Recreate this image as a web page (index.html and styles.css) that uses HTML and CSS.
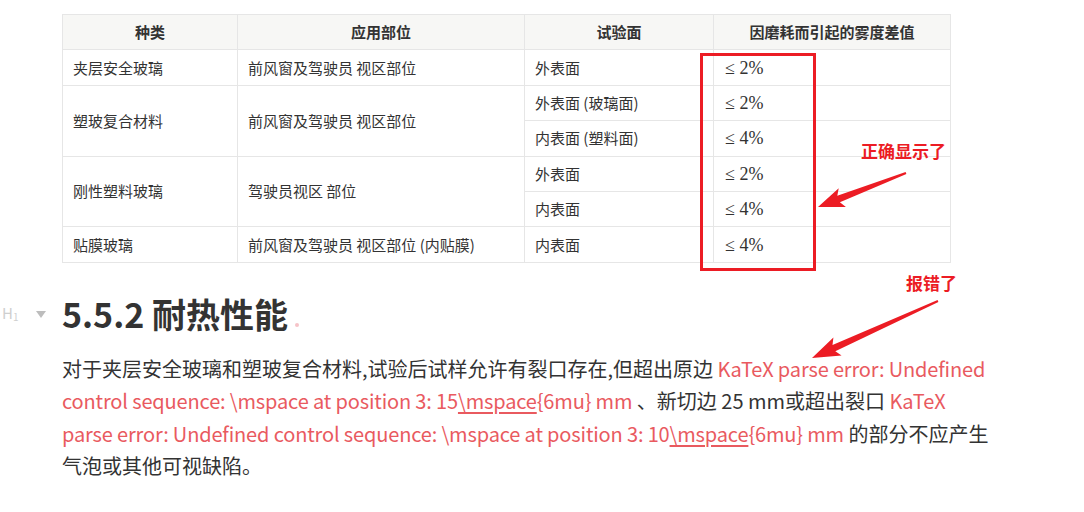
FILE: index.html
```html
<!DOCTYPE html>
<html lang="zh">
<head>
<meta charset="UTF-8">
<meta name="viewport" content="width=device-width, initial-scale=1.0">
<title>5.5.2 耐热性能</title>
<link rel="stylesheet" href="styles.css">
</head>
<body>

<div class="doc">
    <table class="spec">
        <thead>
            <tr>
                <th class="c1">种类</th>
                <th class="c2">应用部位</th>
                <th class="c3">试验面</th>
                <th class="c4">因磨耗而引起的雾度差值</th>
            </tr>
        </thead>
        <tbody>
            <tr>
                <td>夹层安全玻璃</td>
                <td>前风窗及驾驶员 视区部位</td>
                <td>外表面</td>
                <td><span class="math">≤ 2%</span></td>
            </tr>
            <tr>
                <td rowspan="2">塑玻复合材料</td>
                <td rowspan="2">前风窗及驾驶员 视区部位</td>
                <td>外表面 (玻璃面)</td>
                <td><span class="math">≤ 2%</span></td>
            </tr>
            <tr>
                <td>内表面 (塑料面)</td>
                <td><span class="math">≤ 4%</span></td>
            </tr>
            <tr>
                <td rowspan="2">刚性塑料玻璃</td>
                <td rowspan="2">驾驶员视区 部位</td>
                <td>外表面</td>
                <td><span class="math">≤ 2%</span></td>
            </tr>
            <tr>
                <td>内表面</td>
                <td><span class="math">≤ 4%</span></td>
            </tr>
            <tr>
                <td>贴膜玻璃</td>
                <td>前风窗及驾驶员 视区部位 (内贴膜)</td>
                <td>内表面</td>
                <td><span class="math">≤ 4%</span></td>
            </tr>
        </tbody>
    </table>

    <h1 class="title">
        <span class="gutter"><span class="hmark">H<sub>1</sub></span><span class="fold"></span></span>
        5.5.2 耐热性能<span class="dot"></span>
    </h1>

    <p class="text">对于夹层安全玻璃和塑玻复合材料,试验后试样允许有裂口存在,但超出原边 <span class="err">KaTeX parse error: Undefined control sequence: \mspace at position 3: 15<u>\mspace</u>{6mu} mm</span> 、新切边 25 mm或超出裂口 <span class="err">KaTeX parse error: Undefined control sequence: \mspace at position 3: 10<u>\mspace</u>{6mu} mm</span> 的部分不应产生气泡或其他可视缺陷。</p>
</div>

<!-- screenshot markup drawn on top -->
<div class="marks">
    <div class="box"></div>
    <div class="note note-ok">正确显示了</div>
    <div class="note note-err">报错了</div>
    <svg class="arrows" width="1084" height="512" viewBox="0 0 1084 512">
        <polygon fill="#ec1c24" points="905.6,172.1 837.3,195.7 838.7,188.2 818,207 845.9,207 839.9,202.3 906.4,173.9"/>
        <polygon fill="#ec1c24" points="937.6,300.1 832.5,344.9 833.4,337.4 812,358 841.6,355.6 835.3,351.3 938.4,301.9"/>
    </svg>
</div>

</body>
</html>
```

FILE: styles.css
```css
body {
    margin: 0;
    background-color: #fff;
    color: #333;
    font-family: "Noto Sans CJK SC", "Noto Sans", sans-serif;
}
.doc {
    width: 936px;
    padding: 14px 0 0 62px;
}
.spec {
    width: 889px;
    border-collapse: collapse;
    font-size: 15px;
    color: #333;
}
.spec th,
.spec td {
    border: 1px solid #e6e6e6;
    height: 34.4px;
    padding: 0 10px;
    text-align: left;
    font-weight: normal;
    line-height: 20px;
}
.spec th {
    background-color: #f7f7f5;
    text-align: center;
    font-weight: bold;
}
.spec .c1 { width: 154px; }
.spec .c2 { width: 266px; }
.spec .c3 { width: 168px; }
.math {
    font-family: "Liberation Serif", "DejaVu Serif", serif;
    font-size: 18px;
    padding-left: 1px;
}
.title {
    position: relative;
    margin: 29px 0 0;
    font-size: 34px;
    line-height: 44px;
    font-weight: bold;
    color: #333;
}
.gutter {
    position: absolute;
    left: -60px;
    top: 11px;
    display: flex;
    align-items: center;
    gap: 18px;
}
.hmark {
    font-size: 15px;
    line-height: 20px;
    font-weight: normal;
    color: #cfcfcf;
}
.hmark sub {
    font-size: 10px;
    vertical-align: -2px;
}
.fold {
    width: 0;
    height: 0;
    border-left: 5px solid transparent;
    border-right: 5px solid transparent;
    border-top: 7px solid #bdbdbd;
}
.dot {
    display: inline-block;
    width: 4px;
    height: 4px;
    margin-left: 7px;
    border-radius: 50%;
    background-color: #f6c3c8;
    vertical-align: 1px;
}
.text {
    margin: 17px 0 0;
    font-size: 20px;
    line-height: 32.5px;
    color: #333;
}
.err {
    color: #e95a5f;
    letter-spacing: -0.15px;
}
.err u {
    text-decoration-thickness: 2px;
    text-underline-offset: 3px;
}
.marks {
    position: absolute;
    left: 0;
    top: 0;
    width: 1084px;
    height: 512px;
    pointer-events: none;
}
.box {
    position: absolute;
    left: 700px;
    top: 53px;
    width: 110px;
    height: 212px;
    border: 3px solid #ec1c24;
}
.note {
    position: absolute;
    color: #ec1c24;
    font-size: 17px;
    font-weight: bold;
    line-height: 20px;
}
.note-ok {
    left: 861px;
    top: 141px;
}
.note-err {
    left: 906px;
    top: 273px;
}
.arrows {
    position: absolute;
    left: 0;
    top: 0;
}
```
